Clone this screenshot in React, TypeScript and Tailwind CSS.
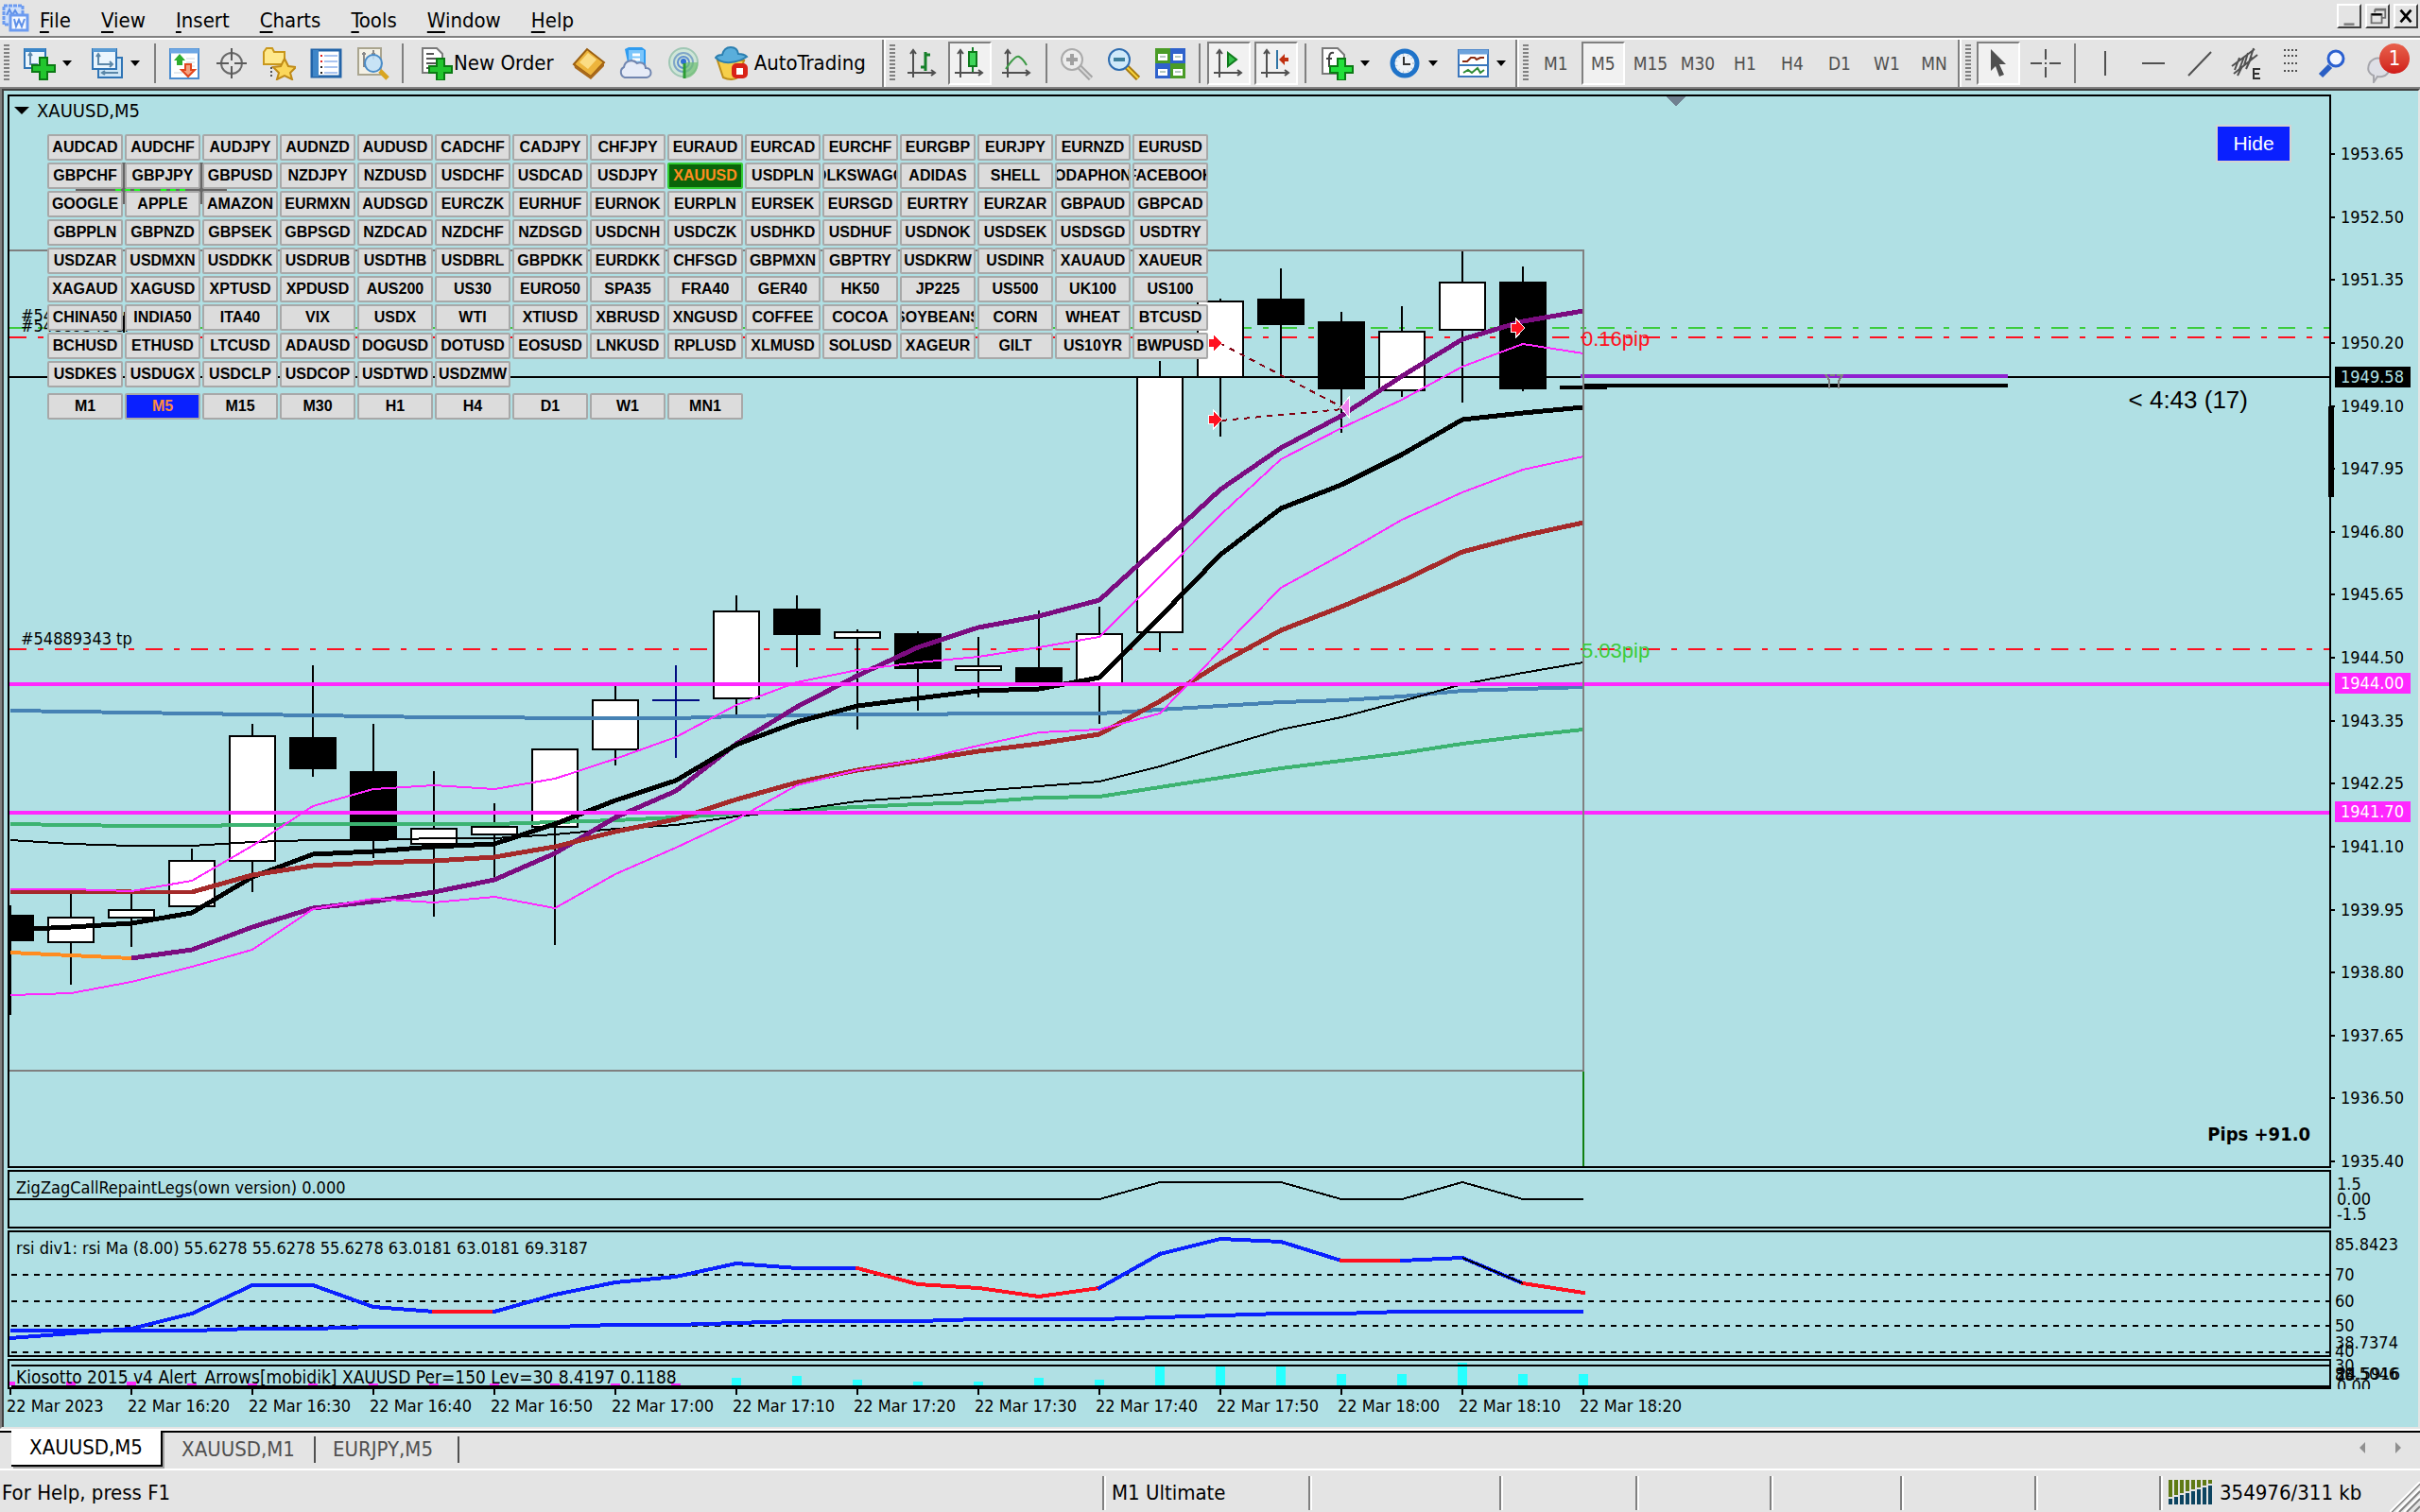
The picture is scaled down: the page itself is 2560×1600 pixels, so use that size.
import type { ReactNode } from "react";
import clsx from "clsx";

const symbols = [
  "AUDCAD AUDCHF AUDJPY AUDNZD AUDUSD CADCHF CADJPY CHFJPY EURAUD EURCAD EURCHF EURGBP EURJPY EURNZD EURUSD",
  "GBPCHF GBPJPY GBPUSD NZDJPY NZDUSD USDCHF USDCAD USDJPY XAUUSD USDPLN VOLKSWAGON ADIDAS SHELL VODAPHONE FACEBOOK",
  "GOOGLE APPLE AMAZON EURMXN AUDSGD EURCZK EURHUF EURNOK EURPLN EURSEK EURSGD EURTRY EURZAR GBPAUD GBPCAD",
  "GBPPLN GBPNZD GBPSEK GBPSGD NZDCAD NZDCHF NZDSGD USDCNH USDCZK USDHKD USDHUF USDNOK USDSEK USDSGD USDTRY",
  "USDZAR USDMXN USDDKK USDRUB USDTHB USDBRL GBPDKK EURDKK CHFSGD GBPMXN GBPTRY USDKRW USDINR XAUAUD XAUEUR",
  "XAGAUD XAGUSD XPTUSD XPDUSD AUS200 US30 EURO50 SPA35 FRA40 GER40 HK50 JP225 US500 UK100 US100",
  "CHINA50 INDIA50 ITA40 VIX USDX WTI XTIUSD XBRUSD XNGUSD COFFEE COCOA SOYBEANS CORN WHEAT BTCUSD",
  "BCHUSD ETHUSD LTCUSD ADAUSD DOGUSD DOTUSD EOSUSD LNKUSD RPLUSD XLMUSD SOLUSD XAGEUR GILT US10YR BWPUSD",
  "USDKES USDUGX USDCLP USDCOP USDTWD USDZMW",
].flatMap((row) => row.split(" "));

const frames = ["M1", "M5", "M15", "M30", "H1", "H4", "D1", "W1", "MN1"];
const prices = [
  "1953.65", "1952.50", "1951.35", "1950.20", "1949.10", "1947.95", "1946.80", "1945.65", "1944.50",
  "1943.35", "1942.25", "1941.10", "1939.95", "1938.80", "1937.65", "1936.50", "1935.40",
];
const times = [
  "2023", "16:20", "16:30", "16:40", "16:50", "17:00", "17:10",
  "17:20", "17:30", "17:40", "17:50", "18:00", "18:10", "18:20",
];

// [bar, open/close top, open/close bottom, high, low, filled]
const candles: [number, number, number, number, number, boolean][] = [
  [0, 968, 996, 958, 1074, true],
  [1, 970, 998, 945, 1042, false],
  [2, 962, 972, 946, 1002, false],
  [3, 910, 960, 898, 960, false],
  [4, 778, 912, 766, 944, false],
  [5, 780, 814, 704, 822, true],
  [6, 816, 889, 766, 908, true],
  [7, 876, 894, 816, 970, false],
  [8, 874, 884, 850, 930, false],
  [9, 792, 876, 792, 1000, false],
  [10, 740, 794, 726, 810, false],
  [12, 646, 740, 630, 758, false],
  [13, 644, 672, 630, 706, true],
  [14, 668, 676, 666, 772, false],
  [15, 670, 708, 668, 752, true],
  [16, 704, 710, 674, 738, false],
  [17, 706, 724, 646, 724, true],
  [18, 670, 724, 642, 766, false],
  [19, 398, 670, 382, 690, false],
  [20, 318, 400, 316, 462, false],
  [21, 316, 344, 284, 396, true],
  [22, 340, 412, 330, 458, true],
  [23, 350, 414, 324, 420, false],
  [24, 298, 350, 266, 426, false],
  [25, 298, 412, 282, 414, true],
];

const averages: { color: string; width: number; from?: number; ys: number[] }[] = [
  { color: "#4682b4", width: 4, ys: [752, 753, 754, 755, 756, 757, 758, 759, 759, 760, 760, 760, 758, 757, 756, 756, 755, 755, 755, 751, 747, 743, 741, 737, 731, 729, 727] },
  { color: "#3cb371", width: 4, ys: [872, 873, 874, 874, 873, 872, 872, 872, 872, 870, 868, 865, 861, 857, 854, 851, 849, 844, 843, 833, 823, 813, 805, 797, 787, 779, 772] },
  { color: "#000", width: 2, ys: [889, 893, 895, 895, 891, 889, 889, 887, 887, 883, 877, 873, 864, 857, 848, 843, 837, 832, 827, 811, 791, 772, 759, 742, 724, 712, 701] },
  { color: "#ff8c20", width: 4, ys: [1008, 1011, 1014] },
  { color: "#7b0c80", width: 5, from: 2, ys: [1014, 1005, 981, 961, 954, 944, 931, 903, 865, 837, 787, 748, 715, 685, 664, 652, 635, 577, 518, 474, 440, 398, 359, 340, 329] },
  { color: "#000", width: 5, ys: [984, 981, 977, 966, 928, 904, 901, 896, 893, 872, 847, 826, 788, 764, 747, 739, 731, 729, 717, 653, 587, 538, 513, 481, 444, 437, 431] },
  { color: "#a52a2a", width: 5, ys: [943, 943, 944, 944, 926, 916, 913, 911, 907, 896, 880, 867, 846, 828, 815, 805, 795, 787, 777, 742, 702, 667, 642, 615, 584, 567, 553] },
  { color: "#ff28ff", width: 2, ys: [941, 941, 943, 932, 895, 853, 835, 831, 835, 824, 803, 780, 746, 722, 709, 701, 695, 685, 674, 610, 545, 486, 453, 423, 388, 364, 374] },
  { color: "#ff28ff", width: 2, ys: [1053, 1051, 1039, 1023, 1005, 962, 951, 955, 949, 961, 925, 897, 867, 831, 815, 804, 789, 775, 772, 755, 688, 622, 587, 550, 521, 497, 483] },
];

const rsiSlow = [1408, 1408, 1408, 1408, 1406, 1406, 1404, 1404, 1404, 1404, 1402, 1402, 1400, 1398, 1398, 1398, 1396, 1396, 1396, 1394, 1392, 1390, 1390, 1388, 1388, 1388, 1388];
const rsiFast = [1416, 1411, 1406, 1390, 1360, 1360, 1383, 1388, 1388, 1370, 1357, 1351, 1337, 1342, 1342, 1359, 1363, 1372, 1363, 1327, 1311, 1314, 1334, 1334, 1331, 1358, 1368];
const rsiFalling = [7, 14, 15, 16, 17, 22, 25];
const volumes = [1462, 1462, 1462, 1464, 1464, 1464, 1464, 1464, 1464, 1464, 1464, 1464, 1458, 1456, 1460, 1462, 1462, 1458, 1460, 1446, 1446, 1446, 1454, 1454, 1442, 1454, 1454];

const barX = (i: number) => 11 + i * 64;
const toPoints = (ys: number[], from = 0) => ys.map((y, i) => `${barX(i + from)},${y}`).join(" ");

export default function App() {
  return (
    <div className="flex min-h-screen flex-col bg-[#e4e4e4] font-['DejaVu_Sans_Condensed','DejaVu_Sans',sans-serif] text-[22px] leading-6 text-black">
      <MenuBar />
      <Toolbar />
      <main className="flex flex-1 border-t-2 border-b-2 border-l-2 border-[#808080] border-b-[#e4e4e4]">
        <div className="flex flex-1 flex-col gap-[2px] border-t-2 border-r-2 border-l-2 border-t-[#404040] border-r-[#e4e4e4] border-l-[#404040] bg-[#b0e0e4] pt-1 pl-1 text-[18px]">
          <PricePanel />
          <ZigZagPanel />
          <RsiPanel />
          <KiosottoPanel />
        </div>
      </main>
      <ChartTabs />
      <StatusBar />
    </div>
  );
}

function MenuBar() {
  return (
    <header className="flex h-[42px] items-start justify-between border-b-2 border-white">
      <nav className="flex h-10 flex-1 items-center gap-8 border-b-2 border-[#808080]">
        <svg viewBox="0 0 30 30" className="-mr-[22px] ml-[2px] h-[30px] w-[30px]">
          <path d="M2 2h20v20H2z" fill="#cfe0fa" stroke="#6c9bf0" strokeWidth="3" strokeDasharray="4 1" />
          <path d="M5 12l3-6 3 6 3-5 3 5" fill="none" stroke="#5d8fe8" strokeWidth="2" />
          <path d="M9 12h18v16H9z" fill="#f4f8ff" stroke="#6c9bf0" strokeWidth="3" />
          <path d="M13 16l2 8 3-7 3 7 3-8" fill="none" stroke="#5d8fe8" strokeWidth="2" />
        </svg>
        {["File", "View", "Insert", "Charts", "Tools", "Window", "Help"].map((item) => (
          <button key={item} className="pt-[5px]">
            <u className="underline-offset-4">{item[0]}</u>
            {item.slice(1)}
          </button>
        ))}
      </nav>
      <div className="flex h-10 gap-1 border-b-2 border-[#808080] pt-1 pr-[2px]">
        <WindowButton label="Minimize">
          <path d="M5 20h12v3H5z" fill="#808080" />
        </WindowButton>
        <WindowButton label="Restore">
          <path d="M8 4h12v10h-4M8 4v4M8 5h12M4 10h12v10H4zM4 11h12" fill="none" stroke="#707070" strokeWidth="2" />
          <path d="M4 10h12" stroke="#000" strokeWidth="2" />
        </WindowButton>
        <WindowButton label="Close">
          <path d="M5 5l12 14M17 5L5 19" stroke="#000" strokeWidth="3" />
        </WindowButton>
      </div>
    </header>
  );
}

function WindowButton({ label, children }: { label: string; children: ReactNode }) {
  return (
    <button aria-label={label} className="h-[26px] w-[26px] border-2 border-white border-r-[#404040] border-b-[#404040]">
      <svg viewBox="0 0 22 24" className="h-full w-full">{children}</svg>
    </button>
  );
}

function Grip() {
  return (
    <i className="mr-1 ml-1 h-10 w-[6px] shrink-0 bg-[repeating-linear-gradient(to_bottom,#808080_0_2px,transparent_2px_4px)]" />
  );
}

function Sep() {
  return <i className="mx-[5px] h-[42px] w-[2px] shrink-0 bg-[#808080]" />;
}

function GroupEnd() {
  return <i className="h-full w-1 shrink-0 border-l-2 border-[#808080] bg-white" />;
}

function Icon({ children }: { children: ReactNode }) {
  return (
    <svg viewBox="0 0 36 36" fill="none" className="h-9 w-9 shrink-0">
      {children}
    </svg>
  );
}

function Tool({ label, on, children }: { label: string; on?: boolean; children: ReactNode }) {
  return (
    <button
      aria-label={label}
      aria-pressed={on}
      className={clsx(
        "flex shrink-0 items-center justify-center text-[19px] text-[#505050]",
        on
          ? "mx-[2px] h-[46px] w-[46px] border-2 border-white border-t-[#808080] border-l-[#808080] bg-[#f1f1f1]"
          : "h-[46px] w-[50px]",
      )}
    >
      {children}
    </button>
  );
}

function SplitTool({ label, children }: { label: string; children: ReactNode }) {
  return (
    <button aria-label={label} className="flex h-[46px] shrink-0 items-center gap-[6px] px-[10px]">
      <Icon>{children}</Icon>
      <svg viewBox="0 0 10 6" className="h-[6px] w-[10px]">
        <path d="M0 0h10L5 6z" />
      </svg>
    </button>
  );
}

const plus = "M14 14h8v8h8v7h-8v8h-8v-8H6v-7h8z";
const axes = "M8 5v28M2 28h28M5 8l3-4 3 4M27 25l4 3-4 3";

function Toolbar() {
  return (
    <div className="flex h-[50px] items-center">
      <Grip />
      <SplitTool label="New chart">
        <path d="M2 3h22v20H2z" fill="#eaf5fd" stroke="#2f74b5" strokeWidth="2" />
        <path d="M2 4h22" stroke="#3b86c8" strokeWidth="4" />
        <path d="M8 8v11h8M6 10l2-3 2 3" stroke="#5b87a8" strokeWidth="2" />
        <path d={plus} transform="translate(4 -2)" fill="#22c52e" stroke="#0b7a14" strokeWidth="2" />
      </SplitTool>
      <SplitTool label="Profiles">
        <path d="M8 12h25v21H8z" fill="#cfe6f6" stroke="#2f74b5" strokeWidth="2" />
        <path d="M2 3h25v21H2z" fill="#eaf5fd" stroke="#2f74b5" strokeWidth="2" />
        <path d="M2 4h25" stroke="#5a9bd3" strokeWidth="4" />
        <path d="M8 9v10h14M6 11l2-3 2 3M20 16l3 3-3 3M13 28h16M15 26l-3 2 3 2" stroke="#5b87a8" strokeWidth="2" />
      </SplitTool>
      <Sep />
      <Tool label="Market Watch">
        <Icon>
          <path d="M3 3h30v31H3z" fill="#fff" stroke="#4a8cd0" strokeWidth="2" />
          <path d="M3 5h30" stroke="#6fa8e4" strokeWidth="5" />
          <path d="M20 13h9M20 17h9M20 21h9M7 28h9" stroke="#c9d4de" strokeWidth="1" />
          <path d="M13 8l6 7h-3v5h-6v-5H7z" fill="#2fae2f" />
          <path d="M22 32l7-7h-4v-6h-6v6h-4z" fill="#f4a080" stroke="#e2461c" strokeWidth="2" />
        </Icon>
      </Tool>
      <Tool label="Crosshair data">
        <Icon>
          <circle cx="18" cy="18" r="11" stroke="#6a6a6a" strokeWidth="2" />
          <path d="M18 2v13M18 21v13M2 18h13M21 18h13" stroke="#5a5a5a" strokeWidth="2" />
        </Icon>
      </Tool>
      <Tool label="Navigator">
        <Icon>
          <path d="M2 6l3-4h6l2 4h11v13H2z" fill="#ffe98c" stroke="#c9971c" strokeWidth="2" />
          <path d="M10 22v12" stroke="#555" strokeWidth="2" strokeDasharray="2 2" />
          <path d="M24 13l4 8 8 1-6 6 2 7-8-4-8 4 2-7-6-6 8-1z" fill="#fbd75b" stroke="#bf8a17" strokeWidth="2" />
        </Icon>
      </Tool>
      <Tool label="Data Window">
        <Icon>
          <path d="M3 4h30v28H3z" fill="#fff" stroke="#2364a8" strokeWidth="3" />
          <path d="M7 4v28" stroke="#3f86c8" strokeWidth="6" />
          <path d="M16 10h14M16 16h14M16 22h14M16 28h14" stroke="#a9c4f0" strokeWidth="2" />
          <path d="M12 10h2M12 16h2" stroke="#e02020" strokeWidth="2" />
          <path d="M12 22h2M12 28h2" stroke="#222" strokeWidth="2" />
        </Icon>
      </Tool>
      <Tool label="Strategy Tester">
        <Icon>
          <path d="M2 2h24v28H2z" fill="#f4f1e6" stroke="#aaa58f" strokeWidth="2" />
          <path d="M8 6v16M18 4v10M6 8h4M16 8h4" stroke="#8a8a8a" strokeWidth="2" />
          <path d="M25 26l8 8" stroke="#d9a520" strokeWidth="5" />
          <circle cx="18" cy="18" r="9" fill="#bfe0f8" fillOpacity=".85" stroke="#4a8cc8" strokeWidth="2" />
        </Icon>
      </Tool>
      <Sep />
      <button className="flex h-[46px] shrink-0 items-center px-3">
        <Icon>
          <path d="M3 2h15l6 6v20H3z" fill="#fff" stroke="#7a7a7a" strokeWidth="2" />
          <path d="M7 8h8M7 13h12M7 18h10M7 23h6" stroke="#555" strokeWidth="2" />
          <path d={plus} transform="translate(4 -1)" fill="#22c52e" stroke="#0b7a14" strokeWidth="2" />
        </Icon>
        New Order
      </button>
      <Tool label="MetaEditor">
        <Icon>
          <path d="M2 19L16 3l18 14-14 15z" fill="#edb43c" stroke="#9b5f10" strokeWidth="2" />
          <path d="M2 19l18 12v4L3 23zM20 31l14-14v4L20 35z" fill="#a9691a" />
          <path d="M8 17l9-10 9 7-9 10z" fill="#fbdc84" />
        </Icon>
      </Tool>
      <Tool label="VPS">
        <Icon>
          <path d="M6 3l4-2h14l4 3v18H10z" fill="#2f9cf0" />
          <path d="M10 4h16v18H10z" fill="#7cc6fb" />
          <path d="M14 9h8M14 14h8" stroke="#fff" strokeWidth="3" />
          <path d="M6 33a6 6 0 01-1-11 8 8 0 0114-4 6 6 0 019 5 5 5 0 011 10z" fill="#e6ebf7" stroke="#7186b0" strokeWidth="2" />
        </Icon>
      </Tool>
      <Tool label="Signals">
        <Icon>
          <circle cx="18" cy="17" r="15" fill="#cfe6d8" stroke="#9fc7b4" strokeWidth="2" />
          <circle cx="18" cy="17" r="10" stroke="#7fa6c8" strokeWidth="2" />
          <circle cx="18" cy="17" r="6" stroke="#5f8fd0" strokeWidth="2" />
          <path d="M18 17h15a15 15 0 01-13 17h-2z" fill="#6dbf72" fillOpacity=".7" />
          <circle cx="18" cy="16" r="3" fill="#2f6fd6" />
          <path d="M19 18v16" stroke="#2c9c34" strokeWidth="3" />
        </Icon>
      </Tool>
      <button className="flex h-[46px] shrink-0 items-center gap-[6px] pr-[17px] pl-2">
        <Icon>
          <path d="M3 15l6 18q9 4 16 0l6-18z" fill="#f6cf4a" stroke="#bf8f1a" strokeWidth="2" />
          <path d="M1 12q6 6 16 5t17-6q-3-3-9-3-1-7-8-7T8 9q-5 0-7 3z" fill="#5aaedb" stroke="#2b7fb0" strokeWidth="2" />
          <rect x="18" y="18" width="17" height="16" rx="5" fill="#d92318" />
          <path d="M23 23h7v7h-7z" fill="#fff" />
        </Icon>
        AutoTrading
      </button>
      <GroupEnd />

      <Grip />
      <Tool label="Bar chart">
        <Icon>
          <path d={axes} stroke="#505050" strokeWidth="2" />
          <path d="M21 6v20M21 9h5M16 22h5" stroke="#16802a" strokeWidth="3" />
        </Icon>
      </Tool>
      <Tool label="Candlesticks" on>
        <Icon>
          <path d={axes} stroke="#505050" strokeWidth="2" />
          <path d="M21 1v26" stroke="#16802a" strokeWidth="2" />
          <path d="M17 6h8v15h-8z" fill="#3fd65a" stroke="#0e7a1c" strokeWidth="2" />
        </Icon>
      </Tool>
      <Tool label="Line chart">
        <Icon>
          <path d={axes} stroke="#505050" strokeWidth="2" />
          <path d="M6 24q10-15 14-13t8 9" stroke="#3d9a46" strokeWidth="2" />
        </Icon>
      </Tool>
      <Sep />
      <Tool label="Zoom in">
        <Icon>
          <path d="M22 22l12 12" stroke="#a4a4a4" strokeWidth="6" />
          <path d="M22 22l12 12" stroke="#d8d8d8" strokeWidth="2" />
          <circle cx="14" cy="14" r="11" fill="#ececec" stroke="#ababab" strokeWidth="2" />
          <path d="M14 8v12M8 14h12" stroke="#a0a0a0" strokeWidth="4" />
        </Icon>
      </Tool>
      <Tool label="Zoom out">
        <Icon>
          <path d="M22 22l12 12" stroke="#a87a10" strokeWidth="6" />
          <path d="M22 22l12 12" stroke="#f8d43c" strokeWidth="2" />
          <circle cx="14" cy="14" r="11" fill="#cfeafa" stroke="#2f6db0" strokeWidth="2" />
          <path d="M8 14h12" stroke="#3d7f9c" strokeWidth="4" />
        </Icon>
      </Tool>
      <Tool label="Tile windows">
        <Icon>
          <path d="M2 2h16v16H2zM18 18h16v16H18z" fill="#4a9c26" />
          <path d="M18 2h16v16H18zM2 18h16v16H2z" fill="#2f62cc" />
          <path d="M5 8h10v7H5zM21 8h10v7H21zM5 24h10v7H5zM21 24h10v7H21z" fill="#fff" />
          <path d="M7 11h6M23 11h6M7 27h6M23 27h6" stroke="#b5c9c0" strokeWidth="2" />
        </Icon>
      </Tool>
      <Sep />
      <Tool label="Auto scroll" on>
        <Icon>
          <path d={axes} stroke="#505050" strokeWidth="2" />
          <path d="M17 7l9 7-9 7z" fill="#35c04a" stroke="#0e7a1c" strokeWidth="2" />
        </Icon>
      </Tool>
      <Tool label="Chart shift" on>
        <Icon>
          <path d={axes} stroke="#505050" strokeWidth="2" />
          <path d="M19 4v20" stroke="#2f74a5" strokeWidth="2" />
          <path d="M21 14l6-6v4h4v4h-4v4z" fill="#c03010" />
        </Icon>
      </Tool>
      <Sep />
      <SplitTool label="Indicators">
        <path d="M2 2h16l7 7v20H2z" fill="#fff" stroke="#7a7a7a" strokeWidth="2" />
        <path d="M14 7q-5-1-5 5v10M6 13h6" stroke="#444" strokeWidth="2" />
        <path d={plus} transform="translate(4 -1)" fill="#22e03a" stroke="#0b7a14" strokeWidth="2" />
      </SplitTool>
      <SplitTool label="Periods">
        <circle cx="17" cy="18" r="13" fill="#eef3f8" stroke="#1f73c9" strokeWidth="5" />
        <circle cx="17" cy="18" r="9" stroke="#b9c6d2" strokeWidth="2" strokeDasharray="1 4" />
        <path d="M16 11v8h7" stroke="#333" strokeWidth="2" />
      </SplitTool>
      <SplitTool label="Templates">
        <path d="M2 4h31v28H2z" fill="#fff" stroke="#3a76bc" strokeWidth="2" />
        <path d="M2 6h31" stroke="#6ea3dc" strokeWidth="5" />
        <path d="M2 20h31" stroke="#3a76bc" strokeWidth="2" />
        <path d="M6 16h5l4-4h4l2 2 4-2h4" stroke="#8a2a12" strokeWidth="2" />
        <path d="M7 28l5-3 4 3 6-5 3 5 4-3" stroke="#2e8a34" strokeWidth="2" />
      </SplitTool>
      <GroupEnd />

      <Grip />
      {["M1", "M5", "M15", "M30", "H1", "H4", "D1", "W1", "MN"].map((frame) => (
        <Tool key={frame} label={frame} on={frame === "M5"}>
          {frame}
        </Tool>
      ))}
      <GroupEnd />

      <Grip />
      <Tool label="Cursor" on>
        <Icon>
          <path d="M10 3l16 16h-7l5 11-5 2-4-11-5 5z" fill="#505050" />
        </Icon>
      </Tool>
      <Tool label="Crosshair">
        <Icon>
          <path d="M18 3v11M18 22v11M2 18h12M22 18h12M17 18h2" stroke="#505050" strokeWidth="2" />
        </Icon>
      </Tool>
      <Sep />
      <Tool label="Vertical line">
        <Icon>
          <path d="M19 5v26" stroke="#505050" strokeWidth="2" />
        </Icon>
      </Tool>
      <Tool label="Horizontal line">
        <Icon>
          <path d="M8 18h24" stroke="#505050" strokeWidth="2" />
        </Icon>
      </Tool>
      <Tool label="Trendline">
        <Icon>
          <path d="M7 31L31 6" stroke="#505050" strokeWidth="2" />
        </Icon>
      </Tool>
      <Tool label="Equidistant channel">
        <Icon>
          <path d="M3 21L27 3M5 29L30 9M6 25l5-13M11 24l5-13M16 20l4-13M21 17l5-15M9 31l5-10M18 24l6-13" stroke="#505050" strokeWidth="2" />
          <path d="M33 24h-7v10h7M26 29h6" stroke="#303030" strokeWidth="2" />
        </Icon>
      </Tool>
      <Tool label="Fibonacci">
        <Icon>
          <path d="M8 4h16M8 10h16M8 18h16M8 26h16" stroke="#505050" strokeWidth="2" strokeDasharray="2 2" />
        </Icon>
      </Tool>
      <div className="ml-auto flex items-center gap-4 pr-3">
        <button aria-label="Search">
          <Icon>
            <path d="M14 21L4 31" stroke="#2a5fc4" strokeWidth="6" />
            <circle cx="20" cy="13" r="8" fill="#f3f6ff" stroke="#2a5fd0" strokeWidth="3" />
          </Icon>
        </button>
        <button aria-label="Notifications" className="relative flex w-[46px] pt-3">
          <svg viewBox="0 0 30 30" className="h-[30px] w-[30px]">
            <path d="M4 8q8-9 18 0 6 8-2 14-5 2-8 1l-4 6v-7Q-1 18 4 8z" fill="#dedfe6" stroke="#a6a6ac" strokeWidth="2" />
          </svg>
          <span className="absolute top-0 right-0 flex h-8 w-8 items-center justify-center rounded-full bg-linear-to-b from-[#e8604c] to-[#d01818] text-white">
            1
          </span>
        </button>
      </div>
    </div>
  );
}

function Panel({ className, top, axis, children }: { className: string; top: number; axis: ReactNode; children: ReactNode }) {
  const [plot, overlay] = Array.isArray(children) ? children : [children, null];
  return (
    <section className={clsx("flex", className)}>
      <div className="relative flex-1 border-2 border-black">
        <svg className="absolute inset-0 h-full w-full" shapeRendering="crispEdges" fill="none">
          <g transform={`translate(-10 ${-top})`}>{plot}</g>
        </svg>
        {overlay}
      </div>
      <div className="relative w-[92px]">{axis}</div>
    </section>
  );
}

function Arrow({ x, y }: { x: number; y: number }) {
  return (
    <path
      transform={`translate(${x} ${y})`}
      d="M-6-4h5v-5l8 9-8 9v-5h-5z"
      fill="#ff1020"
      stroke="#fff"
      strokeWidth="2"
      paintOrder="stroke"
    />
  );
}

function PricePanel() {
  return (
    <Panel
      className="flex-1"
      top={102}
      axis={
        <>
          <ul className="flex h-full flex-col justify-between pt-14">
            {prices.map((price) => (
              <li key={price} className="flex h-[14px] items-center gap-[6px] leading-[14px]">
                <i className="h-[2px] w-1 bg-black" />
                {price}
              </li>
            ))}
          </ul>
          <b className="absolute top-[288px] left-1 h-[22px] w-20 bg-black pl-[6px] leading-[22px] font-normal text-[#b0e0e4]">1949.58</b>
          <b className="absolute top-[612px] left-1 h-[22px] w-20 bg-[#ff28ff] pl-[6px] leading-[22px] font-normal text-white">1944.00</b>
          <b className="absolute top-[748px] left-1 h-[22px] w-20 bg-[#ff28ff] pl-[6px] leading-[22px] font-normal text-white">1941.70</b>
          <i className="absolute top-[330px] -left-[3px] h-24 w-[6px] bg-black" />
        </>
      }
    >
      <>
        {/* order levels */}
        <g strokeWidth="2" strokeDasharray="18 12 6 12">
          <path d="M10 347H6000" stroke="#3ccc3c" />
          <path d="M10 357H6000M10 687H6000" stroke="#ff1020" />
        </g>
        <path d="M10 265H1675V1234M10 1133H1675" stroke="#808080" strokeWidth="2" />
        <path d="M1675 1134V1240" stroke="#108010" strokeWidth="2" />
        <path d="M10 399H6000" stroke="#000" strokeWidth="2" />
        <path d="M131 172v44M213 172v44M80 201h160" stroke="#666" strokeWidth="4" />
        <path d="M122 201h30M170 201h28" stroke="#20ff20" strokeWidth="2" strokeDasharray="6 4" />
        <path d="M131 334v18" stroke="#000" strokeWidth="2" />

        {candles.map(([bar, top, bottom, high, low, filled]) => (
          <g key={bar} stroke="#000" strokeWidth="2">
            <path d={`M${barX(bar)} ${high}V${low}`} />
            <rect
              x={barX(bar) - 24}
              y={top + 1}
              width="48"
              height={bottom - top - 2}
              fill={filled ? "#000" : "#fff"}
            />
          </g>
        ))}
        <path d="M715 704v98M690 741h50" stroke="#000c80" strokeWidth="2" />
        <path d="M10 399H1675" stroke="#000" strokeWidth="2" />

        {averages.map(({ color, width, from, ys }, i) => (
          <polyline key={i} points={toPoints(ys, from)} stroke={color} strokeWidth={width} />
        ))}
        <path d="M8 724H6000M8 860H6000" stroke="#ff28ff" strokeWidth="4" />
        <path d="M1650 410h50M1675 408h449" stroke="#000" strokeWidth="4" />
        <path d="M1672 398h452" stroke="#9020d0" strokeWidth="4" />
        <path d="M1675 264V1134" stroke="#808080" strokeWidth="2" />
        <path d="M1931 396l4 6v9M1936 397h5M1943 397h7M1945 411v-8l4-6" stroke="#808080" strokeWidth="2" />

        <path d="M1290 363L1420 431M1292 445L1420 433" stroke="#800010" strokeWidth="2" strokeDasharray="6 6" />
        <Arrow x={1285} y={363} />
        <Arrow x={1285} y={444} />
        <Arrow x={1605} y={347} />
        <path d="M1427 421v20l-8-10z" fill="#ee82ee" stroke="#fff" strokeWidth="2" paintOrder="stroke" />
        <path d="M1763 102h20l-10 11z" fill="#708090" />

        <g fill="#000" fontSize="18">
          <text x="22" y="340">#54889343 tp</text>
          <text x="22" y="351">#54889343 sl</text>
          <text x="22" y="682">#54889343 tp</text>
        </g>
        <g className="font-['Liberation_Sans',sans-serif]" fontSize="22">
          <text x="1673" y="366" fill="#ff1020">0.16pip</text>
          <text x="1673" y="696" fill="#3ccc3c">5.03pip</text>
        </g>
      </>
      <div className="relative flex h-full flex-col justify-between">
        <div className="flex justify-between">
          <div>
            <div className="flex h-[30px] items-center gap-2 pl-[5px] text-[20px]">
              <svg viewBox="0 0 16 8" className="h-2 w-4">
                <path d="M0 0h16L8 8z" />
              </svg>
              XAUUSD,M5
            </div>
            <div className="grid grid-cols-[repeat(15,80px)] gap-[2px] pt-[10px] pl-10">
              {symbols.map((symbol) => (
                <PadButton
                  key={symbol}
                  label={symbol}
                  tone={
                    symbol === "XAUUSD"
                      ? "border-[#32cd32] bg-[#0a640a] text-[#ff8c20]"
                      : "border-[#a8a8a8] bg-[#dcdcdc]"
                  }
                />
              ))}
            </div>
            <div className="flex gap-[2px] pt-[6px] pl-10">
              {frames.map((frame) => (
                <PadButton
                  key={frame}
                  label={frame}
                  tone={
                    frame === "M5"
                      ? "border-[#a8a8a8] bg-[#0a20ff] text-[#ff8c40]"
                      : "border-[#a8a8a8] bg-[#dcdcdc]"
                  }
                />
              ))}
            </div>
          </div>
          <div className="flex flex-col items-end pt-[30px] pr-10 font-['Liberation_Sans',sans-serif]">
            <button className="h-10 w-20 border-2 border-[#d3d3d3] bg-[#0a20ff] text-[21px] text-white">Hide</button>
            <p className="mt-[238px] mr-[46px] text-[26px] leading-[26px]">{"< 4:43 (17)"}</p>
          </div>
        </div>
        <p className="pr-[20px] pb-[22px] text-right text-[20px] font-bold">Pips +91.0</p>
      </div>
    </Panel>
  );
}

function PadButton({ label, tone }: { label: string; tone: string }) {
  return (
    <button
      className={clsx(
        "flex h-7 w-20 items-center justify-center overflow-hidden rounded-[2px] border-2 font-['Liberation_Sans',sans-serif] text-[16px] leading-4 font-bold",
        tone,
      )}
    >
      {label}
    </button>
  );
}

function ZigZagPanel() {
  return (
    <Panel
      className="h-[62px]"
      top={1240}
      axis={
        <ul className="flex h-full flex-col justify-center pl-[6px] leading-4">
          <li>1.5</li>
          <li>0.00</li>
          <li>-1.5</li>
        </ul>
      }
    >
      <path
        d="M10 1269H1163L1227 1251H1355L1419 1269H1483L1547 1251L1611 1269H1675"
        stroke="#000"
        strokeWidth="2"
      />
      <p className="relative pt-[5px] pl-[7px]">ZigZagCallRepaintLegs(own version) 0.000</p>
    </Panel>
  );
}

function RsiPanel() {
  return (
    <Panel
      className="h-[134px]"
      top={1304}
      axis={
        <ul className="h-full overflow-hidden pt-[6px] pl-1 leading-[18px]">
          <li className="mb-[14px]">85.8423</li>
          <li className="mb-[10px]">70</li>
          <li className="mb-2">60</li>
          <li>50</li>
          <li>38.7374</li>
          <li className="-mt-[9px]">40</li>
        </ul>
      }
    >
      <>
        <path d="M12 1349H6000M12 1377H6000M12 1403H6000M12 1431H6000" stroke="#000" strokeWidth="2" strokeDasharray="6 6" />
        <polyline points={toPoints(rsiSlow)} stroke="#0a20ff" strokeWidth="4" />
        {rsiFast.slice(1).map((y, i) => (
          <path
            key={i}
            d={`M${barX(i)} ${rsiFast[i]}L${barX(i + 1)} ${y}`}
            stroke={rsiFalling.includes(i) ? "#ff1020" : "#0a20ff"}
            strokeWidth="4"
            strokeLinecap="square"
          />
        ))}
        <path d="M1547 1331L1611 1358" stroke="#000" strokeWidth="2" />
      </>
      <p className="relative pt-[5px] pl-[7px]">
        rsi div1: rsi Ma (8.00) 55.6278 55.6278 55.6278 63.0181 63.0181 69.3187
      </p>
    </Panel>
  );
}

function KiosottoPanel() {
  return (
    <div>
      <Panel
        className="h-8"
        top={1440}
        axis={
          <ul className="grid h-full overflow-hidden pl-1 leading-8 *:col-start-1 *:row-start-1">
            <li>30.5046</li>
            <li className="pl-[2px]">24.5916</li>
            <li className="pt-px">88</li>
            <li className="-mt-[9px]">30</li>
            <li className="pt-[13px] pl-[2px]">0.00</li>
          </ul>
        }
      >
        <>
          {volumes.map((y, i) => (
            <path key={i} d={`M${barX(i)} ${y}V1466`} stroke={i < 12 ? "#ff28ff" : "#28ffff"} strokeWidth="10" />
          ))}
          <path d="M12 1445H6000" stroke="#000" strokeWidth="2" />
          <path d="M12 1467H6000" stroke="#000" strokeWidth="2" />
        </>
        <p className="relative pt-[5px] pl-[7px] text-[19px]">
          Kiosotto 2015 v4 Alert_Arrows[mobidik] XAUUSD Per=150 Lev=30 8.4197 0.1188
        </p>
      </Panel>
      <ol className="flex h-10 pl-[2px]">
        {times.map((time) => (
          <li key={time} className="flex w-32 shrink-0 flex-col whitespace-nowrap">
            <i className="h-[6px] w-[2px] bg-black" />
            <span className="-ml-[3px]">22 Mar {time}</span>
          </li>
        ))}
      </ol>
    </div>
  );
}

function ChartTabs() {
  return (
    <div className="border-y-2 border-white">
      <div className="flex h-10 items-start justify-between border-t-2 border-black pl-3 text-[#505050]">
        <div className="flex items-start">
          <button className="-mt-[2px] h-[38px] w-40 border-r-2 border-b-2 border-black bg-white text-black shadow-[2px_2px_0_#a0a0a0]">
            XAUUSD,M5
          </button>
          <button className="mt-1 h-7 w-[162px] border-r-2 border-[#505050]">XAUUSD,M1</button>
          <button className="mt-1 h-7 w-[152px] border-r-2 border-[#505050] pr-2">EURJPY,M5</button>
        </div>
        <div className="flex gap-8 pt-[10px] pr-5">
          <button aria-label="Scroll left">
            <svg viewBox="0 0 6 12" className="h-3 w-[6px]" fill="#909090"><path d="M6 0v12L0 6z" /></svg>
          </button>
          <button aria-label="Scroll right">
            <svg viewBox="0 0 6 12" className="h-3 w-[6px]" fill="#909090"><path d="M0 0v12l6-6z" /></svg>
          </button>
        </div>
      </div>
    </div>
  );
}

function StatusBar() {
  const cell = "h-9 border-l-2 border-[#808080] shadow-[inset_2px_0_0_#fff]";
  return (
    <footer className="flex h-11 items-center pt-[4px]">
      <p className="flex-1 pl-[2px]">For Help, press F1</p>
      <p className={clsx(cell, "w-[218px] pt-[6px] pl-2")}>M1 Ultimate</p>
      <i className={clsx(cell, "w-[202px]")} />
      <i className={clsx(cell, "w-36")} />
      <i className={clsx(cell, "w-[142px]")} />
      <i className={clsx(cell, "w-[138px]")} />
      <i className={clsx(cell, "w-[142px]")} />
      <i className={clsx(cell, "w-[132px]")} />
      <div className={clsx(cell, "flex w-[244px] items-center gap-[6px] pl-2")}>
        <svg viewBox="0 0 48 28" className="h-7 w-12">
          {[0, 1, 2, 3, 4, 5, 6, 7].map((i) => (
            <g key={i}>
              <path d={`M${i * 6} 0h4v${18 - i * 2}h-4z`} fill="#5f7a14" />
              <path d={`M${i * 6} 26h4v${-6 - i * 2}h-4z`} fill="#0c4460" />
            </g>
          ))}
        </svg>
        354976/311 kb
      </div>
      <svg viewBox="0 0 32 32" className="h-8 w-8 self-end" strokeWidth="2">
        <path d="M2 32L32 2M10 32L32 10M18 32l14-14M26 32l6-6" stroke="#808080" />
        <path d="M0 32L32 0M7 32L32 7M15 32l17-17" stroke="#fff" />
      </svg>
    </footer>
  );
}
